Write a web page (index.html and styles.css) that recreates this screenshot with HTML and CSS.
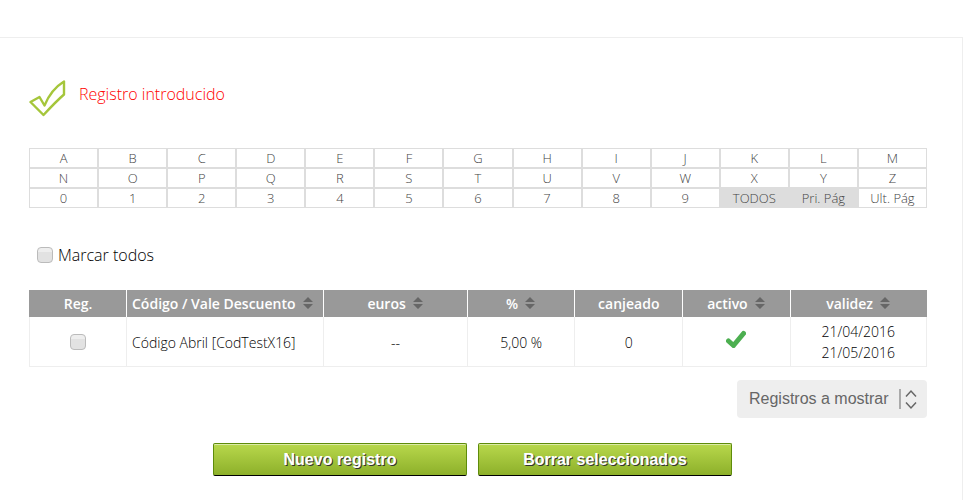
FILE: index.html
```html
<!DOCTYPE html>
<html lang="es">
<head>
  <meta charset="UTF-8">
  <title>Vales descuento</title>
  <meta name="viewport" content="width=device-width, initial-scale=1.0">
  <link rel="stylesheet" href="styles.css">
</head>
<body>
  <main class="panel">
    <div class="aviso">
      <svg class="aviso-icon" viewBox="0 0 38 38" aria-hidden="true">
        <path d="M1.5 23 L10.5 18 L15.5 26.5 C19 18 26 8 35 2.5 V15.5 C27.5 22 21 29 14.5 36 Z" fill="none" stroke="#a5c63b" stroke-width="2.4" stroke-linejoin="round"/>
      </svg>
      <p class="aviso-text">Registro introducido</p>
    </div>

    <nav class="letras">
      <a href="#">A</a><a href="#">B</a><a href="#">C</a><a href="#">D</a><a href="#">E</a><a href="#">F</a><a href="#">G</a><a href="#">H</a><a href="#">I</a><a href="#">J</a><a href="#">K</a><a href="#">L</a><a href="#">M</a>
      <a href="#">N</a><a href="#">O</a><a href="#">P</a><a href="#">Q</a><a href="#">R</a><a href="#">S</a><a href="#">T</a><a href="#">U</a><a href="#">V</a><a href="#">W</a><a href="#">X</a><a href="#">Y</a><a href="#">Z</a>
      <a href="#">0</a><a href="#">1</a><a href="#">2</a><a href="#">3</a><a href="#">4</a><a href="#">5</a><a href="#">6</a><a href="#">7</a><a href="#">8</a><a href="#">9</a><a href="#" class="activa">TODOS</a><a href="#" class="activa">Pri. Pág</a><a href="#">Ult. Pág</a>
    </nav>

    <div class="marcar">
      <input type="checkbox" class="check" id="todos">
      <label for="todos">Marcar todos</label>
    </div>

    <table class="listado">
      <colgroup>
        <col class="c-reg"><col class="c-codigo"><col class="c-euros"><col class="c-dato"><col class="c-dato"><col class="c-dato"><col>
      </colgroup>
      <thead>
        <tr>
          <th>Reg.</th>
          <th class="izq">Código / Vale Descuento<svg class="orden" viewBox="0 0 12 12"><path d="M6 0 L11 5 H1 Z M1 7 H11 L6 12 Z"/></svg></th>
          <th>euros<svg class="orden" viewBox="0 0 12 12"><path d="M6 0 L11 5 H1 Z M1 7 H11 L6 12 Z"/></svg></th>
          <th>%<svg class="orden" viewBox="0 0 12 12"><path d="M6 0 L11 5 H1 Z M1 7 H11 L6 12 Z"/></svg></th>
          <th>canjeado</th>
          <th>activo<svg class="orden" viewBox="0 0 12 12"><path d="M6 0 L11 5 H1 Z M1 7 H11 L6 12 Z"/></svg></th>
          <th>validez<svg class="orden" viewBox="0 0 12 12"><path d="M6 0 L11 5 H1 Z M1 7 H11 L6 12 Z"/></svg></th>
        </tr>
      </thead>
      <tbody>
        <tr>
          <td><input type="checkbox" class="check" aria-label="Código Abril"></td>
          <td class="izq">Código Abril [CodTestX16]</td>
          <td>--</td>
          <td>5,00 %</td>
          <td>0</td>
          <td>
            <svg class="ok" viewBox="0 0 20 18" aria-hidden="true"><path d="M2.5 11 L7.5 15.5 L17.5 3.5" fill="none" stroke="#4caf50" stroke-width="5" stroke-linecap="round" stroke-linejoin="round"/></svg>
          </td>
          <td>21/04/2016<br>21/05/2016</td>
        </tr>
      </tbody>
    </table>

    <div class="mostrar">
      <select class="mostrar-select" aria-label="Registros a mostrar">
        <option>Registros a mostrar</option>
        <option>10</option>
        <option>25</option>
        <option>50</option>
      </select>
      <svg class="mostrar-icon" viewBox="0 0 18 22" aria-hidden="true">
        <path d="M1 1 V21" stroke="#999" stroke-width="1.6"/>
        <path d="M7 8.500 L12 3 L17 8.500 M7 14.500 L12 20 L17 14.500" fill="none" stroke="#666" stroke-width="1.500"/>
      </svg>
    </div>

    <div class="botones">
      <button type="button" class="btn">Nuevo registro</button>
      <button type="button" class="btn">Borrar seleccionados</button>
    </div>
  </main>
</body>
</html>
```
FILE: styles.css
```css
* { box-sizing: border-box; }
html, body {
  margin: 0; padding: 0;
  min-height: 100%;
  background: #fff;
}
body {
  display: flex;
  min-height: 100vh;
  padding: 37px 14px 0 0;
  font-family: 'Open Sans', Arial, sans-serif;
  font-weight: 300;
  font-size: 14px;
  color: #000;
}
.panel {
  flex: 1;
  padding: 41px 35px 24px 29px;
  border-top: 1px solid #eee;
  border-right: 1px solid #eee;
}

/* Aviso */
.aviso {
  display: flex;
  gap: 12px;
}
.aviso-icon { width: 38px; height: 38px; }
.aviso-text {
  margin: 4px 0 0;
  font-size: 16px;
  line-height: 22px;
  color: #f00;
}

/* Filtro por letra */
.letras {
  display: grid;
  grid-template-columns: repeat(13, 1fr);
  margin-top: 31px;
}
.letras a {
  border: 1px solid #ddd;
  line-height: 18px;
  font-size: 13px;
  color: #444;
  text-align: center;
  text-decoration: none;
}
.letras .activa { background: #ddd; }

.marcar {
  display: flex;
  align-items: center;
  gap: 5px;
  margin-top: 36px;
  padding-left: 8px;
  font-size: 16px;
  line-height: 22px;
}
.check {
  appearance: none;
  width: 16px; height: 16px;
  margin: 0;
  border: 1px solid #bbb;
  border-radius: 4px;
  background: linear-gradient(#eee 30%, #e2e2e2 31%);
  vertical-align: middle;
}
.check:checked { background: #8db52a; }

/* Listado */
.listado {
  width: 100%;
  margin-top: 24px;
  border-collapse: collapse;
  table-layout: fixed;
}
.c-reg { width: 97px; }
.c-codigo { width: 22%; }
.c-euros { width: 16%; }
.c-dato { width: 12%; }
.listado th {
  height: 27px;
  padding: 0 5px;
  background: #999;
  border-left: 1px solid #fff;
  color: #fff;
  font-size: 14px;
  font-weight: 600;
  line-height: 20px;
}
.listado th:first-child { border-left-color: #999; }
.listado td {
  height: 49px;
  padding: 4px 5px 2px;
  border: 1px solid #eee;
  border-top: 0;
  line-height: 21px;
  text-align: center;
}
.listado .izq { text-align: left; }
.listado .check {
  display: block;
  margin: 0 auto;
}
.orden {
  width: 12px; height: 12px;
  margin-left: 6px;
  fill: #666;
}
.ok {
  display: block;
  width: 20px; height: 18px;
  margin: -6px auto 0;
}

.mostrar {
  position: relative;
  width: 190px;
  margin: 13px 0 0 auto;
}
.mostrar-select {
  appearance: none;
  display: block;
  width: 100%;
  height: 38px;
  padding: 0 28px 0 12px;
  border: 0;
  border-radius: 4px;
  background: #eee;
  color: #666;
  font-family: 'Liberation Sans', Arial, sans-serif;
  font-size: 16px;
}
.mostrar-icon {
  position: absolute;
  top: 8px; right: 10px;
  width: 18px; height: 22px;
  pointer-events: none;
}

.botones {
  display: flex;
  justify-content: center;
  gap: 11px;
  margin-top: 25px;
  padding-right: 11px;
}
.btn {
  width: 254px;
  height: 33px;
  padding: 2px 0 0;
  border: 1px solid #5e8c0a;
  border-bottom-color: #000;
  border-radius: 2px;
  background: linear-gradient(#b8d84c, #8db02a);
  box-shadow: inset 0 1px 0 #dceba8;
  color: #fff;
  font-family: 'Liberation Sans', Arial, sans-serif;
  font-size: 16px;
  font-weight: bold;
  text-shadow: 1px 1px 0 #333;
  cursor: pointer;
}
```
